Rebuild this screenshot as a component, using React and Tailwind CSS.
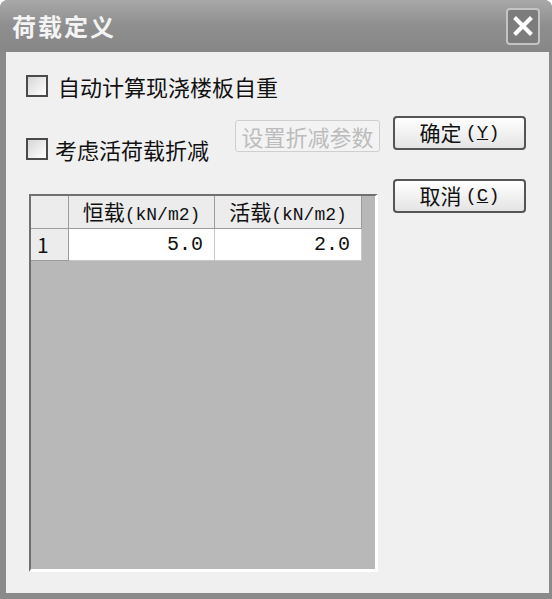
import { X } from 'lucide-react'

const cjk = { fontFamily: '"Noto Sans CJK SC", "Noto Sans", sans-serif' }
const mono = { fontFamily: '"Liberation Mono", "DejaVu Sans Mono", monospace' }

function CheckBox() {
  return (
    <span className="block w-[22px] h-[22px] shrink-0 border-2 border-[#4a4a4a] bg-gradient-to-br from-[#d6d6d6] to-white" />
  )
}

function HeaderLabel({ zh }) {
  return (
    <span className="flex items-baseline text-[21px] text-[#111]">
      <span style={cjk}>{zh}</span>
      <span style={mono} className="text-[18px]">(kN/m2)</span>
    </span>
  )
}

function LoadTable() {
  return (
    <div className="ml-[3px] mt-[34px] w-[349px] h-[378px] flex flex-col bg-[#b8b8b8] border-t-2 border-l-2 border-[#707070] border-b-[3px] border-r-[3px] border-b-white border-r-white">
      <div className="flex h-[33px]">
        <div className="w-[38px] border-r border-b border-[#9c9c9c] bg-[#ececec]" />
        <div className="w-[146px] flex items-center justify-center border-r border-b border-[#9c9c9c] bg-[#ececec]">
          <HeaderLabel zh="恒载" />
        </div>
        <div className="w-[147px] flex items-center justify-center border-r border-b border-[#9c9c9c] bg-[#ececec]">
          <HeaderLabel zh="活载" />
        </div>
      </div>
      <div className="flex h-[32px]">
        <div style={cjk} className="w-[38px] flex items-center pl-[6px] text-[21px] text-[#111] border-r border-b border-[#9c9c9c] bg-[#ececec]">
          1
        </div>
        <div style={mono} className="w-[146px] flex items-center justify-end pr-[11px] text-[20px] text-[#111] border-r border-b border-[#c8c8c8] bg-white">
          5.0
        </div>
        <div style={mono} className="w-[147px] flex items-center justify-end pr-[11px] text-[20px] text-[#111] border-r border-b border-[#c8c8c8] bg-white">
          2.0
        </div>
      </div>
    </div>
  )
}

function PushButton({ label, hot }) {
  return (
    <button className="w-[133px] h-[34px] flex items-center justify-center rounded-[4px] border-2 border-[#555] bg-gradient-to-b from-white to-[#e4e4e4] text-[21px] text-[#111]">
      <span style={cjk}>{label}</span>
      <span style={mono} className="ml-[4px] text-[19px]">
        (<span className="underline">{hot}</span>)
      </span>
    </button>
  )
}

export default function App() {
  return (
    <div className="w-[552px] h-[599px] flex flex-col bg-[#8a8a8a] rounded-t-[8px] overflow-hidden" style={cjk}>
      {/* Title bar */}
      <div className="h-[52px] flex items-center justify-between pl-[12px] pr-[12px] bg-gradient-to-b from-[#a8a8a8] via-[#8e8e8e] to-[#878787]">
        <span className="text-[24px] font-bold tracking-[2px] text-[#f4f4f4]">荷载定义</span>
        <div className="w-[34px] h-[37px] flex items-center justify-center rounded-[4px] border-2 border-[#c4c4c4] bg-[#7c7c7c]">
          <X className="w-[28px] h-[28px] text-white" strokeWidth={3.5} strokeLinecap="square" />
        </div>
      </div>

      {/* Body */}
      <div className="flex-1 flex border-l-[6px] border-r-[3px] border-b-[6px] border-[#8a8a8a] bg-[#f0f0f0]">
        <div className="w-[387px] flex flex-col pl-[20px] pt-[23px]">
          <label className="flex items-center h-[22px]">
            <CheckBox />
            <span className="ml-[10px] text-[22px] leading-none text-[#111]">自动计算现浇楼板自重</span>
          </label>

          <div className="flex items-start mt-[23px]">
            <label className="w-[209px] flex items-center h-[22px] mt-[18px]">
              <CheckBox />
              <span className="ml-[7px] text-[22px] leading-none text-[#111]">考虑活荷载折减</span>
            </label>
            <button className="w-[145px] h-[32px] flex items-center justify-center rounded-[3px] border border-[#cfcfcf] bg-[#f3f3f3] text-[22px] text-[#bcbcbc]">
              设置折减参数
            </button>
          </div>

          <LoadTable />
        </div>

        <div className="flex flex-col pt-[64px] gap-[29px]">
          <PushButton label="确定" hot="Y" />
          <PushButton label="取消" hot="C" />
        </div>
      </div>
    </div>
  )
}
